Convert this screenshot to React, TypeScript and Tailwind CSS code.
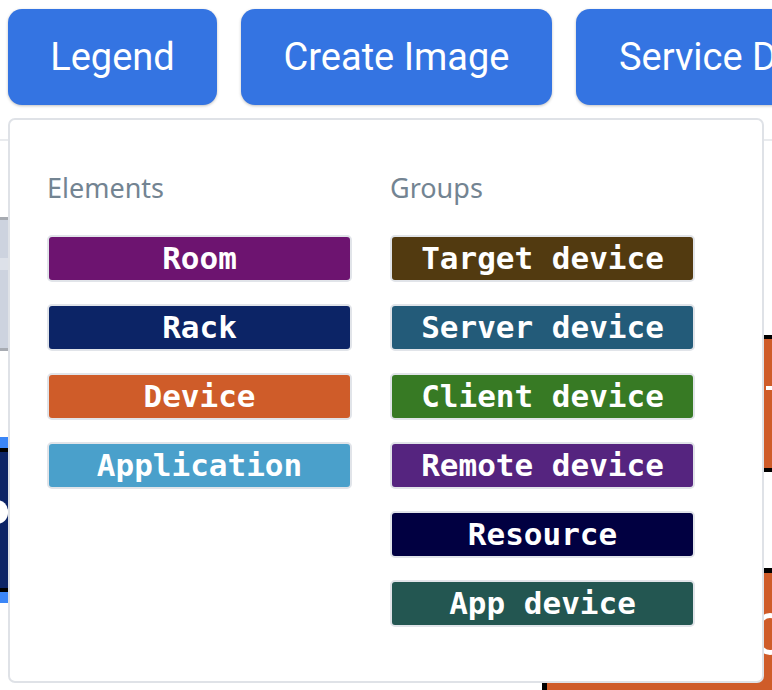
import React from "react";

type Item = { label: string; bg: string };

const ELEMENTS: Item[] = [
  { label: "Room", bg: "bg-[#6d1470]" },
  { label: "Rack", bg: "bg-[#0c2466]" },
  { label: "Device", bg: "bg-[#cf5c29]" },
  { label: "Application", bg: "bg-[#4aa0cb]" },
];

const GROUPS: Item[] = [
  { label: "Target device", bg: "bg-[#523a10]" },
  { label: "Server device", bg: "bg-[#235b79]" },
  { label: "Client device", bg: "bg-[#377a24]" },
  { label: "Remote device", bg: "bg-[#55247f]" },
  { label: "Resource", bg: "bg-[#010041]" },
  { label: "App device", bg: "bg-[#235651]" },
];

function Badge({ item }: { item: Item }) {
  return (
    <div
      className={`h-[47px] w-full flex items-center justify-center rounded-[5px] border-2 border-[#e1e4e9] ${item.bg} text-white font-bold text-[31px] leading-none whitespace-pre`}
      style={{ fontFamily: '"DejaVu Sans Mono", "Liberation Mono", monospace' }}
    >
      {item.label}
    </div>
  );
}

function Column({ title, items }: { title: string; items: Item[] }) {
  return (
    <div className="flex flex-col w-[305px]">
      <div
        className="text-[27px] leading-[36px] text-[#738492] mb-[29px]"
        style={{ fontFamily: '"Noto Sans", "Open Sans", sans-serif' }}
      >
        {title}
      </div>
      <div className="flex flex-col gap-[22px]">
        {items.map((it) => (
          <Badge key={it.label} item={it} />
        ))}
      </div>
    </div>
  );
}

// diagram canvas peeking out behind the legend popover
function Canvas() {
  return (
    <div className="absolute inset-0">
      <div className="absolute left-0 right-0 top-[139px] h-[2px] bg-[#e9ebee]" />
      {/* left gray node */}
      <div className="absolute left-0 top-[217px] w-[40px] h-[134px] bg-[#cdd3df] border-y-[3px] border-[#a7abb2]">
        <div className="mt-[38px] h-[12px] bg-[#dde1e9]" />
      </div>
      {/* left navy node */}
      <div className="absolute left-0 top-[437px] w-[40px] h-[166px] bg-[#3b86f7] py-[11px]">
        <div className="h-full bg-[#0c2466] border-y-[4px] border-black relative">
          <div className="absolute -left-[14px] top-[48px] w-[22px] h-[24px] rounded-full bg-white" />
        </div>
      </div>
      {/* right orange nodes */}
      <div className="absolute left-[730px] top-[335px] w-[60px] h-[137px] bg-[#cf5c29] border-y-[4px] border-black">
        <div className="absolute left-[36px] top-[47px] w-[10px] h-[4px] bg-white" />
      </div>
      <div className="absolute left-[730px] top-[568px] w-[60px] h-[130px] bg-[#cf5c29] border-t-[5px] border-black">
        <div className="absolute left-[27px] top-[40px] w-[26px] h-[42px] rounded-full border-[5px] border-white" />
      </div>
      <div className="absolute left-[542px] top-[683px] w-[240px] h-[10px] bg-[#cf5c29] border-l-[5px] border-black" />
    </div>
  );
}

export default function App() {
  const btn =
    "h-[96px] shrink-0 rounded-[14px] bg-[#3474e2] text-white text-[38px] leading-none shadow-[0_1px_3px_rgba(0,0,0,0.25)] flex items-center whitespace-nowrap";
  return (
    <div
      className="relative w-[772px] h-[690px] overflow-hidden bg-white"
      style={{ fontFamily: "Roboto, sans-serif" }}
    >
      <Canvas />
      <div className="relative flex flex-col pl-[8px] pt-[9px]">
        <div className="flex gap-[24px]">
          <button className={`${btn} w-[209px] justify-center`}>Legend</button>
          <button className={`${btn} w-[311px] justify-center`}>Create Image</button>
          <button className={`${btn} px-[43px]`}>Service Dependencies</button>
        </div>
        <div className="mt-[13px] w-[756px] h-[565px] bg-white border-2 border-[#dfe2e7] rounded-[7px] pl-[37px] pt-[50px] flex gap-[38px]">
          <Column title="Elements" items={ELEMENTS} />
          <Column title="Groups" items={GROUPS} />
        </div>
      </div>
    </div>
  );
}
